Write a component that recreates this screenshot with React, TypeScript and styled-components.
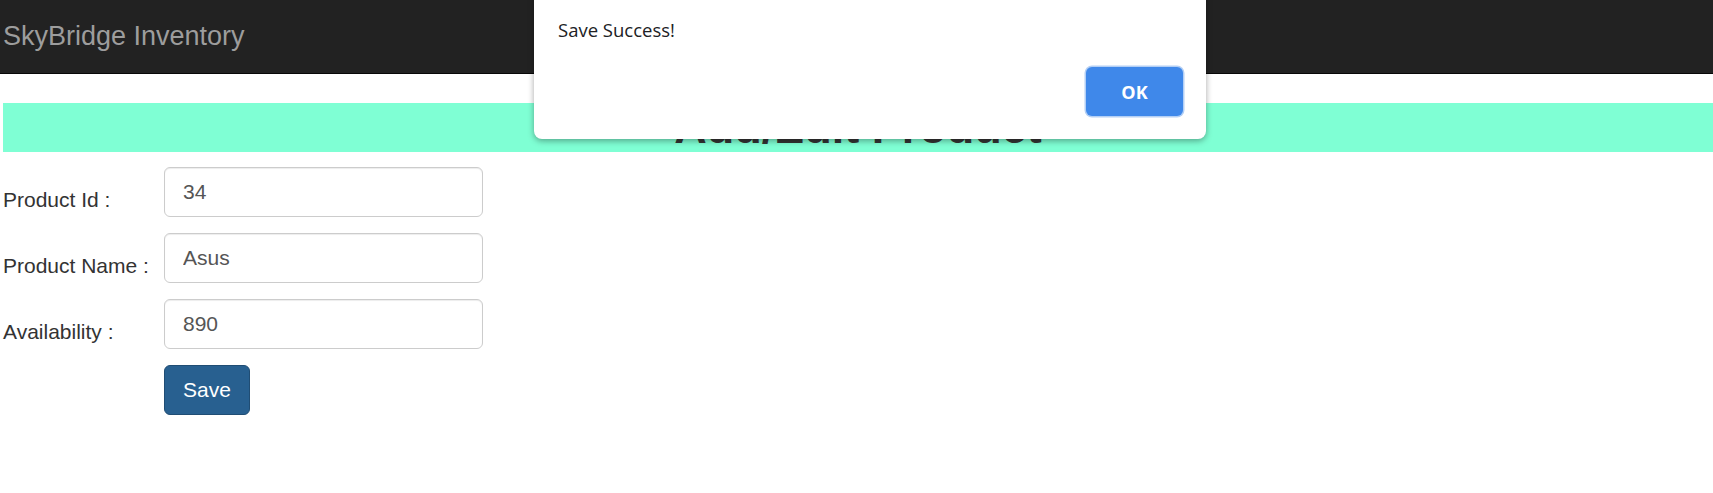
import React from 'react';
import styled, { createGlobalStyle } from 'styled-components';

const GlobalStyle = createGlobalStyle`
  html, body {
    margin: 0;
    padding: 0;
    background: #fff;
    font-family: "Liberation Sans", Arial, sans-serif;
    color: #333;
  }
`;

const Page = styled.div`
  position: relative;
  width: 1713px;
  min-height: 493px;
`;

const Navbar = styled.nav`
  height: 73px;
  background: #222;
  border-bottom: 1px solid #080808;
  display: flex;
  align-items: flex-start;
`;

const Brand = styled.a`
  padding: 21px 0 0 3px;
  font-size: 27px;
  line-height: 30px;
  color: #9d9d9d;
  text-decoration: none;
`;

const Content = styled.div`
  padding: 29px 0 0 0;
`;

const TitleBand = styled.h1`
  margin: 0 0 15px 3px;
  background: #7fffd4;
  height: 49px;
  font-size: 45px;
  line-height: 49px;
  font-weight: bold;
  color: #333;
  text-align: center;
`;

const Form = styled.form`
  display: flex;
  flex-direction: column;
  gap: 16px;
  padding-left: 3px;
`;

const Row = styled.div`
  display: flex;
  align-items: flex-start;
`;

const Label = styled.label`
  width: 161px;
  padding-top: 18px;
  font-size: 21px;
  line-height: 30px;
  color: #333;
`;

const Input = styled.input`
  box-sizing: border-box;
  width: 319px;
  height: 50px;
  padding: 0 18px;
  font-family: "Liberation Sans", Arial, sans-serif;
  font-size: 21px;
  color: #555;
  background: #fff;
  border: 1px solid #ccc;
  border-radius: 6px;
  box-shadow: inset 0 1px 1px rgba(0, 0, 0, 0.075);
  outline: none;
`;

const SaveButton = styled.button`
  margin-left: 161px;
  box-sizing: border-box;
  width: 86px;
  height: 50px;
  padding: 0;
  font-family: "Liberation Sans", Arial, sans-serif;
  font-size: 21px;
  color: #fff;
  background: #286090;
  border: 1px solid #204d74;
  border-radius: 6px;
  cursor: pointer;
`;

const Dialog = styled.div`
  position: absolute;
  top: -8px;
  left: 534px;
  width: 672px;
  box-sizing: border-box;
  padding: 25px 23px 23px 24px;
  background: #fff;
  border-radius: 8px;
  box-shadow: 0 2px 6px rgba(0, 0, 0, 0.35);
  font-family: "Open Sans", "Noto Sans", sans-serif;
`;

const DialogText = styled.div`
  font-size: 18.5px;
  line-height: 25px;
  color: #202124;
`;

const DialogActions = styled.div`
  display: flex;
  justify-content: flex-end;
  margin-top: 25px;
`;

const OkButton = styled.button`
  width: 97px;
  height: 49px;
  font-family: "Open Sans", "Noto Sans", sans-serif;
  font-size: 18px;
  font-weight: 700;
  color: #fff;
  background: #3f88ea;
  border: none;
  border-radius: 6px;
  box-shadow: 0 0 0 1.5px #b3cff5;
  cursor: pointer;
`;

const fields = [
  { label: 'Product Id :', value: '34' },
  { label: 'Product Name :', value: 'Asus' },
  { label: 'Availability :', value: '890' },
];

export default function App() {
  return (
    <Page>
      <GlobalStyle />
      <Navbar>
        <Brand href="#">SkyBridge Inventory</Brand>
      </Navbar>
      <Content>
        <TitleBand>Add/Edit Product</TitleBand>
        <Form onSubmit={e => e.preventDefault()}>
          {fields.map(f => (
            <Row key={f.label}>
              <Label>{f.label}</Label>
              <Input defaultValue={f.value} />
            </Row>
          ))}
          <Row>
            <SaveButton type="submit">Save</SaveButton>
          </Row>
        </Form>
      </Content>
      <Dialog>
        <DialogText>Save Success!</DialogText>
        <DialogActions>
          <OkButton>OK</OkButton>
        </DialogActions>
      </Dialog>
    </Page>
  );
}
